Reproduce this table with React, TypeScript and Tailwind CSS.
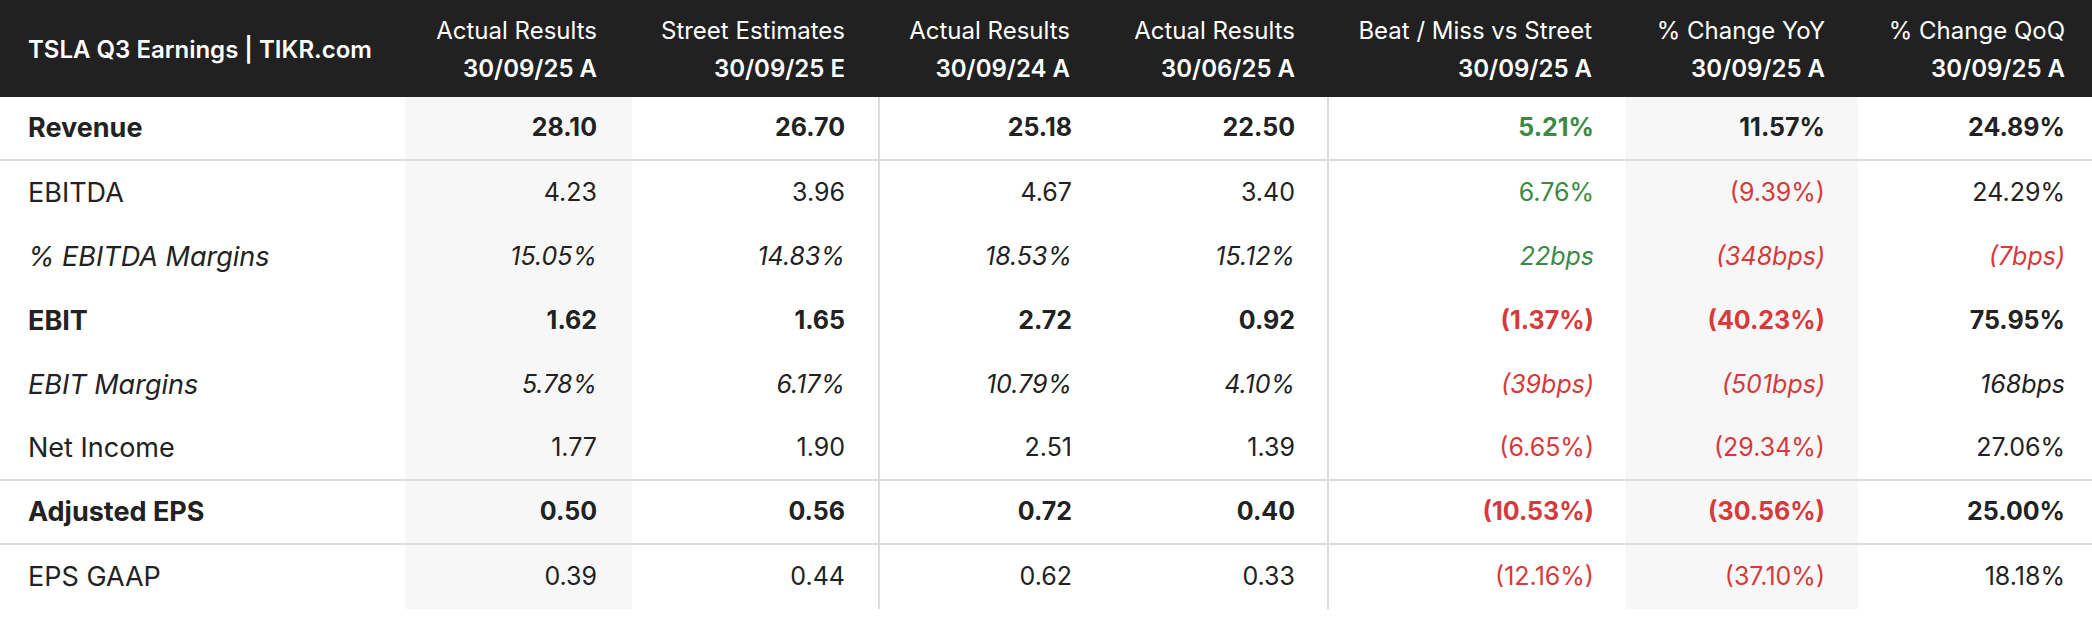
type Tone = "g" | "r" | "n";
type Cell = [string, Tone];

type Row = {
  label: string;
  style: "bold" | "italic" | "normal";
  border?: boolean;
  cells: Cell[];
};

const n = (v: string): Cell => [v, "n"];
const g = (v: string): Cell => [v, "g"];
const r = (v: string): Cell => [v, "r"];

const headers = [
  ["Actual Results", "30/09/25 A"],
  ["Street Estimates", "30/09/25 E"],
  ["Actual Results", "30/09/24 A"],
  ["Actual Results", "30/06/25 A"],
  ["Beat / Miss vs Street", "30/09/25 A"],
  ["% Change YoY", "30/09/25 A"],
  ["% Change QoQ", "30/09/25 A"],
];

const rows: Row[] = [
  { label: "Revenue", style: "bold", border: true, cells: [n("28.10"), n("26.70"), n("25.18"), n("22.50"), g("5.21%"), n("11.57%"), n("24.89%")] },
  { label: "EBITDA", style: "normal", cells: [n("4.23"), n("3.96"), n("4.67"), n("3.40"), g("6.76%"), r("(9.39%)"), n("24.29%")] },
  { label: "% EBITDA Margins", style: "italic", cells: [n("15.05%"), n("14.83%"), n("18.53%"), n("15.12%"), g("22bps"), r("(348bps)"), r("(7bps)")] },
  { label: "EBIT", style: "bold", cells: [n("1.62"), n("1.65"), n("2.72"), n("0.92"), r("(1.37%)"), r("(40.23%)"), n("75.95%")] },
  { label: "EBIT Margins", style: "italic", cells: [n("5.78%"), n("6.17%"), n("10.79%"), n("4.10%"), r("(39bps)"), r("(501bps)"), n("168bps")] },
  { label: "Net Income", style: "normal", border: true, cells: [n("1.77"), n("1.90"), n("2.51"), n("1.39"), r("(6.65%)"), r("(29.34%)"), n("27.06%")] },
  { label: "Adjusted EPS", style: "bold", border: true, cells: [n("0.50"), n("0.56"), n("0.72"), n("0.40"), r("(10.53%)"), r("(30.56%)"), n("25.00%")] },
  { label: "EPS GAAP", style: "normal", cells: [n("0.39"), n("0.44"), n("0.62"), n("0.33"), r("(12.16%)"), r("(37.10%)"), n("18.18%")] },
];

// per-column body classes: shading, dividers, right padding
const colCls = [
  "bg-[#f7f7f7] pr-[35px]",
  "pr-[33px]",
  "border-l-2 border-[#dcdcdc] pr-[33px]",
  "pr-[32px]",
  "border-l-2 border-[#dcdcdc] pr-[32px]",
  "bg-[#f7f7f7] pr-[33px]",
  "pr-[27px]",
];

const headCls = ["pr-[35px]", "pr-[33px]", "pr-[35px]", "pr-[32px]", "pr-[34px]", "pr-[33px]", "pr-[27px]"];

const toneCls = { g: "text-[#3b8a43]", r: "text-[#d63a3a]", n: "text-[#222222]" };
const styleCls = { bold: "font-bold", italic: "italic", normal: "font-normal" };

const grid = "grid grid-cols-[405px_227px_246px_227px_222px_299px_232px_234px]";

export default function App() {
  return (
    <div className="w-[2092px] h-[630px] bg-white font-['Inter',sans-serif] text-[#222222]">
      {/* header */}
      <div className={`${grid} h-[97px] bg-[#212121] text-white`}>
        <div className="flex items-center pl-[28px] pt-[3px] text-[24px] font-semibold">
          TSLA Q3 Earnings | TIKR.com
        </div>
        {headers.map(([top, date], i) => (
          <div key={i} className={`flex flex-col items-end justify-center gap-[10px] pt-[3px] text-[24px] leading-[28px] ${headCls[i]}`}>
            <span className="font-normal">{top}</span>
            <span className="font-semibold">{date}</span>
          </div>
        ))}
      </div>

      {/* body */}
      {rows.map((row) => (
        <div key={row.label} className={`${grid} h-[64px] text-[25px] ${styleCls[row.style]} ${row.border ? "border-b-2 border-[#dcdcdc]" : ""}`}>
          <div className="flex items-center pl-[28px] text-[27px]">{row.label}</div>
          {row.cells.map(([v, t], i) => (
            <div key={i} className={`flex items-center justify-end ${colCls[i]} ${toneCls[t]}`}>
              {v}
            </div>
          ))}
        </div>
      ))}
    </div>
  );
}
